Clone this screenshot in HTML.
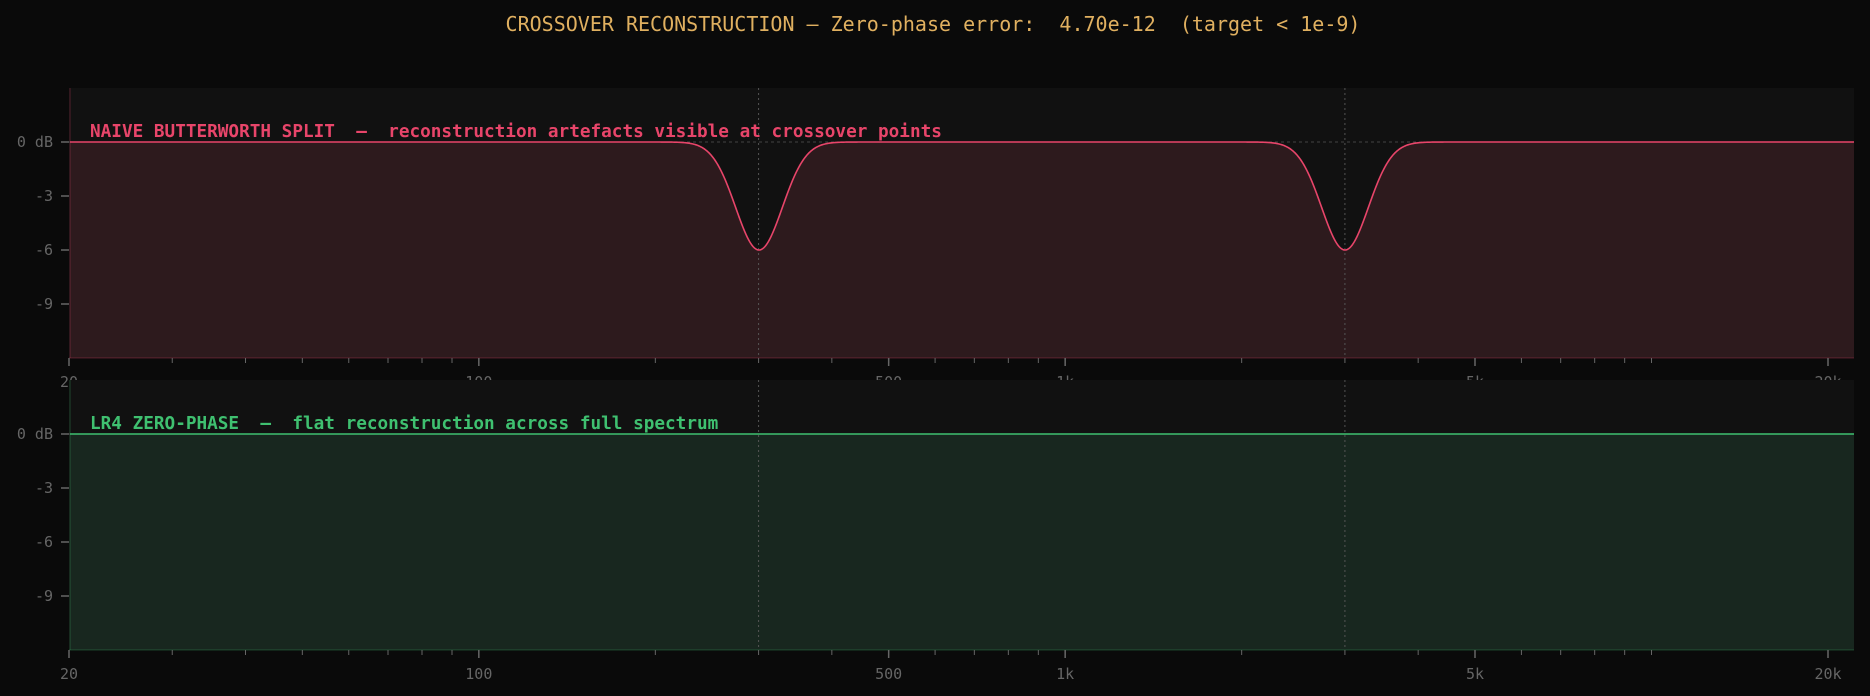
<!DOCTYPE html>
<html><head><meta charset="utf-8"><style>
html,body{margin:0;padding:0;background:#0a0a0a;width:1870px;height:696px;overflow:hidden}
svg text{font-family:"DejaVu Sans Mono","Liberation Mono",monospace;white-space:pre}
</style></head><body>
<svg id="s" width="1870" height="696" xmlns="http://www.w3.org/2000/svg" xml:space="preserve">
<rect width="1870" height="696" fill="#0a0a0a"/>
<text x="933" y="31" fill="#e0b060" font-size="20" text-anchor="middle">CROSSOVER RECONSTRUCTION — Zero-phase error:  4.70e-12  (target &lt; 1e-9)</text>
<g id="g"></g>
</svg>
<script>
const L=69,R=1854,W=1759;
const fx=f=>L+Math.log10(f/20)/3*W;
let h='';
function panel(top,off,col,fill,label,dip){
  const y0=142+off, py=d=>y0-d*18;
  h+=`<rect x="${L}" y="${88+off}" width="${R-L}" height="${270}" fill="#111"/>`;
  const pts=[];
  for(let x=L+1;x<=R;x+=1){
    let d=0;
    if(dip){for(const c of [759,1345]){const t=(x-c)/33;d+=-6*Math.exp(-t*t);}}
    pts.push([x,py(d)]);
  }
  let area=`M${L+1} ${358+off} `+pts.map(q=>`L${q[0]} ${q[1].toFixed(2)}`).join(' ')+` L${R} ${358+off} Z`;
  h+=`<path d="${area}" fill="${fill}"/>`;
  h+=`<line x1="${L+1}" y1="${88+off}" x2="${L+1}" y2="${358+off}" stroke="${col}" stroke-opacity="0.3"/>`;
  h+=`<line x1="${L}" y1="${358+off}" x2="${R}" y2="${358+off}" stroke="${col}" stroke-opacity="0.3"/>`;
  h+=`<line x1="${L}" y1="${y0}" x2="${R}" y2="${y0}" stroke="#444" stroke-dasharray="3,3"/>`;
  for(const f of [300,3000])h+=`<line x1="${fx(f)}" y1="${88+off}" x2="${fx(f)}" y2="${358+off}" stroke="#555" stroke-dasharray="2,3"/>`;
  h+=`<path d="M${pts.map(q=>q[0]+' '+q[1].toFixed(2)).join(' L')}" fill="none" stroke="${col}" stroke-width="1.6"/>`;
  h+=`<text x="90" y="${137+off}" fill="${col}" font-size="17.7" font-weight="bold">${label}</text>`;
  const yl=[['0 dB',0],['-3',-3],['-6',-6],['-9',-9]];
  for(const [t,d] of yl){h+=`<text x="53" y="${py(d)+5}" fill="#666" font-size="15" text-anchor="end">${t}</text><line x1="61" y1="${py(d)}" x2="69" y2="${py(d)}" stroke="#666" stroke-width="1.5"/>`;}
  for(const dec of [10,100,1000,10000])for(let m=1;m<10;m++){const f=dec*m;if(f<20||f>20000)continue;
    const x=fx(f);h+=`<line x1="${x}" y1="${358+off}" x2="${x}" y2="${363+off}" stroke="#666" stroke-width="1"/>`;}
  for(const [f,t] of [[20,'20'],[100,'100'],[500,'500'],[1000,'1k'],[5000,'5k'],[20000,'20k']]){
    const x=fx(f);h+=`<line x1="${x}" y1="${358+off}" x2="${x}" y2="${366+off}" stroke="#666" stroke-width="1.5"/><text x="${x}" y="${387+off}" fill="#666" font-size="15" text-anchor="middle">${t}</text>`;}
}
panel(88,0,'#e8456a','#2d1a1d','NAIVE BUTTERWORTH SPLIT  —  reconstruction artefacts visible at crossover points',true);
panel(380,292,'#3fc070','#18271f','LR4 ZERO-PHASE  —  flat reconstruction across full spectrum',false);
document.getElementById('g').innerHTML=h;
</script>
</body></html>
